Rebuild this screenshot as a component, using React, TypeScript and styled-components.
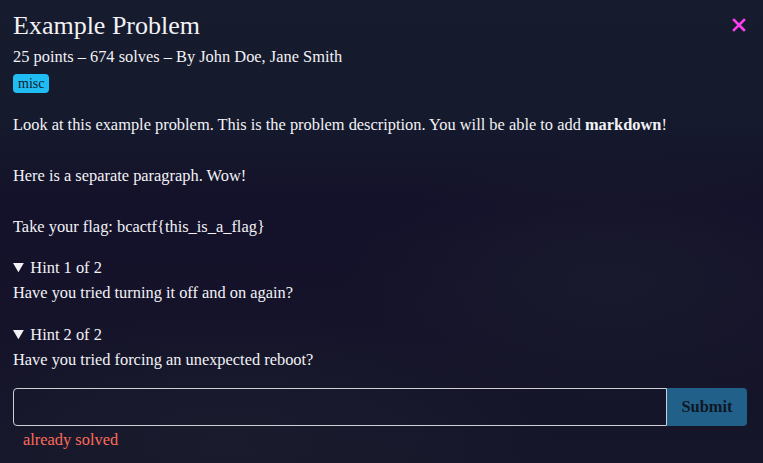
import React from "react";
import styled, { createGlobalStyle } from "styled-components";

const Global = createGlobalStyle`
  html, body { margin: 0; padding: 0; }
  body {
    width: 763px;
    height: 463px;
    overflow: hidden;
    background: #141228;
    font-family: "Liberation Serif", "Times New Roman", serif;
    color: #f2f2f5;
  }
`;

const Modal = styled.div`
  position: relative;
  box-sizing: border-box;
  width: 763px;
  height: 463px;
  padding: 11px 16px 0 13px;
  background:
    radial-gradient(ellipse 60% 40% at 30% 95%, rgba(30, 34, 50, 0.55), transparent 70%),
    radial-gradient(ellipse 50% 40% at 80% 60%, rgba(28, 32, 48, 0.5), transparent 70%),
    linear-gradient(180deg, #171b2e 0%, #151a2d 25%, #14112a 45%, #15132a 70%, #151629 100%);
  display: flex;
  flex-direction: column;
`;

const Title = styled.h1`
  margin: 0;
  font-size: 26px;
  font-weight: 400;
  line-height: 30px;
`;

const Meta = styled.div`
  margin-top: 7px;
  font-size: 16.4px;
  line-height: 18px;
`;

const Tags = styled.div`
  display: flex;
  gap: 6px;
  margin-top: 8px;
`;

const Tag = styled.span`
  background: #20bdf5;
  color: #0f1a2a;
  border-radius: 4px;
  font-size: 14px;
  line-height: 19px;
  padding: 0 5px;
`;

const Close = styled.button`
  position: absolute;
  top: 17px;
  right: 16px;
  width: 16px;
  height: 16px;
  padding: 0;
  border: none;
  background: transparent;
  cursor: pointer;
  display: flex;
  align-items: center;
  justify-content: center;
`;

const Description = styled.div`
  margin-top: 22px;
  display: flex;
  flex-direction: column;
  gap: 32px;
`;

const Para = styled.p`
  margin: 0;
  font-size: 16.4px;
  line-height: 19px;
`;

const Hints = styled.div`
  margin-top: 23px;
  display: flex;
  flex-direction: column;
  gap: 24px;
`;

const Hint = styled.details`
  font-size: 16.4px;
  line-height: 18px;
`;

const Summary = styled.summary`
  cursor: pointer;
  margin-bottom: 7px;
`;

const Form = styled.form`
  margin-top: 19px;
  display: flex;
`;

const Input = styled.input`
  flex: 1;
  box-sizing: border-box;
  height: 38px;
  background: transparent;
  border: 1px solid #cfcfd4;
  border-radius: 4px 0 0 4px;
  color: #fff;
  font-family: inherit;
  font-size: 16px;
  padding: 0 10px;
  outline: none;
`;

const Submit = styled.button`
  width: 80px;
  height: 38px;
  border: none;
  border-radius: 0 4px 4px 0;
  background: #216189;
  color: #0f1626;
  font-family: "Liberation Serif", "Times New Roman", serif;
  font-weight: 700;
  font-size: 16.4px;
  cursor: pointer;
`;

const Status = styled.div`
  margin-top: 5px;
  margin-left: 10px;
  color: #ff6a5a;
  font-size: 16.4px;
  line-height: 18px;
`;

export default function App() {
  return (
    <>
      <Global />
      <Modal>
        <Title>Example Problem</Title>
        <Meta>25 points – 674 solves – By John Doe, Jane Smith</Meta>
        <Tags>
          <Tag>misc</Tag>
        </Tags>
        <Close aria-label="close">
          <svg width="14" height="14" viewBox="0 0 14 14">
            <path d="M2 2 L12 12 M12 2 L2 12" stroke="#ff3df0" strokeWidth="2.6" strokeLinecap="square" />
          </svg>
        </Close>
        <Description>
          <Para>
            Look at this example problem. This is the problem description. You will be able to add{" "}
            <strong>markdown</strong>!
          </Para>
          <Para>Here is a separate paragraph. Wow!</Para>
          <Para>Take your flag: bcactf{"{"}this_is_a_flag{"}"}</Para>
        </Description>
        <Hints>
          <Hint open>
            <Summary>Hint 1 of 2</Summary>
            Have you tried turning it off and on again?
          </Hint>
          <Hint open>
            <Summary>Hint 2 of 2</Summary>
            Have you tried forcing an unexpected reboot?
          </Hint>
        </Hints>
        <Form onSubmit={(e) => e.preventDefault()}>
          <Input type="text" />
          <Submit type="submit">Submit</Submit>
        </Form>
        <Status>already solved</Status>
      </Modal>
    </>
  );
}
